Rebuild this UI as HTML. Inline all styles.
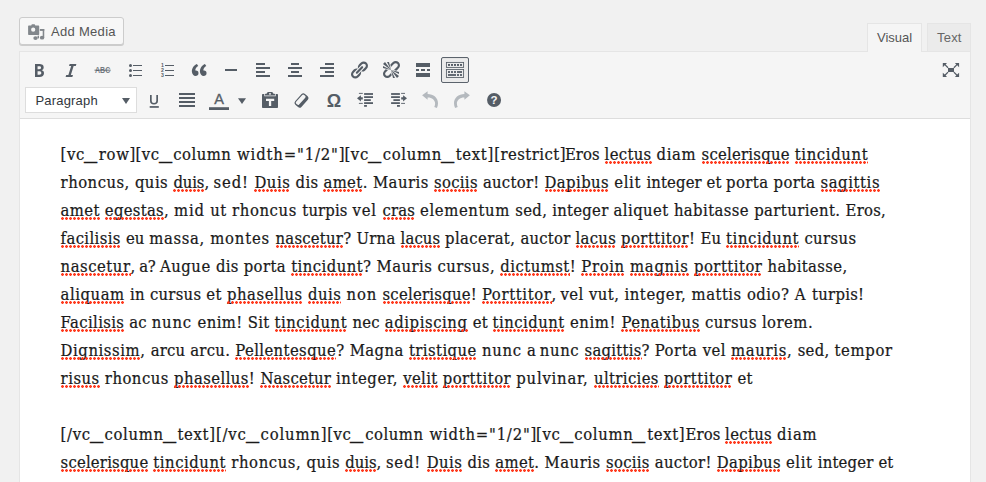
<!DOCTYPE html>
<html><head><meta charset="utf-8"><title>Editor</title>
<style>
html,body{margin:0;padding:0}
body{width:986px;height:482px;overflow:hidden;background:#f1f1f1;position:relative;font-family:"Liberation Sans","DejaVu Sans",sans-serif;font-size:13px;color:#32373c}
.abs{position:absolute;box-sizing:border-box}
#addmedia{left:19px;top:17px;width:105px;height:28px;background:#f7f7f7;border:1px solid #ccc;border-radius:3px;box-shadow:0 1px 0 #ccc;color:#555}
#addmedia span{position:absolute;left:31px;top:6px;line-height:15px;white-space:nowrap;letter-spacing:.3px}
#tab-visual{left:867px;top:23px;width:55px;height:29px;background:#f5f5f5;border:1px solid #e5e5e5;border-bottom:none;color:#555;z-index:3}
#tab-text{left:927px;top:23px;width:44px;height:28px;background:#ebebeb;border:1px solid #e5e5e5;border-bottom:none;color:#666;letter-spacing:.2px}
.tab span{position:absolute;top:6px;line-height:15px;white-space:nowrap}
#wrap{left:19px;top:51px;width:952px;height:440px;border:1px solid #e5e5e5;background:#fff}
#tools{left:20px;top:52px;width:950px;height:67px;background:#f5f5f5;border-bottom:1px solid #ddd}
#fmt{left:25px;top:87px;width:112px;height:26px;background:#fff;border:1px solid #ddd;color:#32373c}
#fmt span{position:absolute;left:9.4px;top:5px;line-height:15px;letter-spacing:.2px}
#fmt i{position:absolute;left:96px;top:10px;width:0;height:0;border-left:4px solid transparent;border-right:4px solid transparent;border-top:6px solid #555d66}
#tog{left:441px;top:57px;width:28px;height:26px;background:#ebebeb;border:1px solid #5b636c;border-radius:2px;box-shadow:inset 0 1px 1px -1px rgba(0,0,0,.3)}
.ic{position:absolute;overflow:visible}
.ln{position:absolute;height:28px;line-height:28px;white-space:pre;font-family:"DejaVu Serif Condensed","DejaVu Serif","Liberation Serif",serif;font-stretch:condensed;font-size:16.5px;color:#1a1a1a;-webkit-text-stroke:.22px #1a1a1a}
.us{display:inline-block;width:13.8px;letter-spacing:0;transform-origin:0 23px;transform:translate(-0.9px,-1.1px) scale(1.77,1.5)}
.sp{position:relative;display:inline-block;line-height:28px}
.sp::after{content:"";position:absolute;left:0;right:0;top:20px;height:3px;background:radial-gradient(circle at 1.5px 1.5px,#ff3b1f 1.1px,rgba(255,59,31,0) 1.6px) 0 0/4px 3px repeat-x}
</style></head><body>
<div id="addmedia" class="abs"><span>Add Media</span></div>
<div id="wrap" class="abs"></div>
<div id="tools" class="abs"></div>
<div id="tab-visual" class="abs tab"><span style="left:9px">Visual</span></div>
<div id="tab-text" class="abs tab"><span style="left:9px">Text</span></div>
<div id="fmt" class="abs"><span>Paragraph</span><i></i></div>
<div id="tog" class="abs"></div>
<svg class="ic" style="left:29px;top:60px" width="20" height="20" viewBox="0 0 20 20" fill="#555d66"><path d="M6 4v13h4.54c1.37 0 2.46-.33 3.26-1 .8-.66 1.2-1.58 1.2-2.77 0-.84-.17-1.51-.51-2.01s-.9-.85-1.67-1.03v-.09c.57-.1 1.02-.4 1.36-.9s.51-1.13.51-1.91c0-1.14-.39-1.98-1.17-2.5C12.75 4.26 11.5 4 9.78 4H6zm2.57 5.15V6.26h1.36c.73 0 1.27.11 1.61.32.34.22.51.58.51 1.07 0 .54-.16.92-.47 1.15s-.82.35-1.51.35h-1.5zm0 2.19h1.6c1.44 0 2.16.53 2.16 1.61 0 .6-.17 1.05-.51 1.34s-.86.43-1.57.43H8.570v-3.38z"/></svg>
<svg class="ic" style="left:61px;top:60px" width="20" height="20" viewBox="0 0 20 20" fill="#555d66"><path d="M14.78 6h-2.13l-2.8 9h2.12l-.62 2H4.6l.62-2h2.14l2.8-9H8.03l.62-2h6.75z"/></svg>
<svg class="ic" style="left:93px;top:60px" width="20" height="20" viewBox="0 0 20 20" fill="#555d66"><text x="2" y="13.200" textLength="15.200" lengthAdjust="spacingAndGlyphs" font-family="Liberation Sans, sans-serif" font-weight="bold" font-size="8.600" fill-opacity=".82">ABC</text><rect x="1.500" y="9.700" width="16.200" height="0.900"/></svg>
<svg class="ic" style="left:125px;top:60px" width="20" height="20" viewBox="0 0 20 20" fill="#555d66"><circle cx="5.5" cy="5.5" r="1.5"/><circle cx="5.5" cy="10.500" r="1.5"/><circle cx="5.5" cy="15.500" r="1.5"/><rect x="8" y="5" width="9" height="1"/><rect x="8" y="10" width="9" height="1"/><rect x="8" y="15" width="9" height="1"/></svg>
<svg class="ic" style="left:157px;top:60px" width="20" height="20" viewBox="0 0 20 20" fill="#555d66"><g font-family="Liberation Sans, sans-serif" font-weight="bold" font-size="5.2"><text x="4" y="7">1</text><text x="4" y="12">2</text><text x="4" y="17">3</text></g><rect x="8" y="5" width="9" height="1"/><rect x="8" y="10" width="9" height="1"/><rect x="8" y="15" width="9" height="1"/></svg>
<svg class="ic" style="left:189px;top:60px" width="20" height="20" viewBox="0 0 20 20" fill="#555d66"><path d="M9.49 13.22c0-.74-.2-1.38-.61-1.9-.62-.78-1.83-.88-2.53-.72-.29-1.650 1.110-3.750 2.920-4.650L7.880 4c-2.730 1.300-5.420 4.280-4.960 8.050C3.210 14.430 4.590 16 6.540 16c.85 0 1.560-.25 2.120-.75s.83-1.180.83-2.030zm8.050 0c0-.74-.2-1.380-.61-1.900-.63-.78-1.830-.88-2.530-.72-.29-1.650 1.110-3.750 2.920-4.650L15.930 4c-2.730 1.300-5.410 4.280-4.950 8.050.29 2.380 1.660 3.950 3.610 3.950.85 0 1.560-.25 2.120-.75s.83-1.180.83-2.030z"/></svg>
<svg class="ic" style="left:221px;top:60px" width="20" height="20" viewBox="0 0 20 20" fill="#555d66"><rect x="4" y="9" width="12" height="2"/></svg>
<svg class="ic" style="left:253px;top:60px" width="20" height="20" viewBox="0 0 20 20" fill="#555d66"><rect x="3" y="3" width="9" height="2"/><rect x="3" y="7" width="14" height="2"/><rect x="3" y="11" width="9" height="2"/><rect x="3" y="15" width="14" height="2"/></svg>
<svg class="ic" style="left:285px;top:60px" width="20" height="20" viewBox="0 0 20 20" fill="#555d66"><rect x="6" y="3" width="8" height="2"/><rect x="3" y="7" width="14" height="2"/><rect x="6" y="11" width="8" height="2"/><rect x="3" y="15" width="14" height="2"/></svg>
<svg class="ic" style="left:317px;top:60px" width="20" height="20" viewBox="0 0 20 20" fill="#555d66"><rect x="8" y="3" width="9" height="2"/><rect x="3" y="7" width="14" height="2"/><rect x="8" y="11" width="9" height="2"/><rect x="3" y="15" width="14" height="2"/></svg>
<svg class="ic" style="left:349px;top:60px" width="20" height="20" viewBox="0 0 20 20" fill="#555d66"><path d="M17.74 2.76c1.68 1.69 1.68 4.41 0 6.1l-1.53 1.52c-1.12 1.12-2.7 1.47-4.14 1.09l2.620-2.610.76-.77.76-.76c.84-.84.84-2.2 0-3.040-.84-.85-2.2-.85-3.040 0l-.77.76-3.380 3.380c-.37-1.440-.02-3.020 1.100-4.140l1.520-1.530c1.690-1.680 4.420-1.680 6.100 0zM8.590 13.430l5.340-5.340c.42-.42.42-1.100 0-1.520-.44-.43-1.130-.39-1.530 0l-5.330 5.340c-.42.42-.42 1.100 0 1.520.44.43 1.130.39 1.520 0zm-.76 2.290l4.140-4.150c.38 1.440.03 3.020-1.090 4.140l-1.520 1.530c-1.690 1.680-4.410 1.680-6.100 0-1.680-1.690-1.680-4.420 0-6.100l1.530-1.520c1.120-1.120 2.700-1.470 4.140-1.100l-4.140 4.150c-.85.84-.85 2.200 0 3.050.84.84 2.200.84 3.040 0z"/></svg>
<svg class="ic" style="left:381px;top:60px" width="20" height="20" viewBox="0 0 20 20" fill="#555d66"><path d="M17.74 2.26c1.680 1.690 1.680 4.410 0 6.100l-1.530 1.520c-.32.33-.69.580-1.080.770L13 10l1.690-1.640.76-.77.76-.76c.84-.84.84-2.200 0-3.040-.84-.85-2.200-.85-3.040 0l-.77.76-.76.76L10 7l-.65-2.140c.19-.38.44-.75.770-1.070l1.520-1.530c1.690-1.680 4.420-1.680 6.100 0zM2 4l8 6-6-8zm4-2l4 8-2-8H6zM2 6l8 4-8-2V6zm7.360 7.690L10 13l.74 2.350-1.380 1.390c-1.690 1.680-4.410 1.680-6.100 0-1.680-1.690-1.680-4.420 0-6.100l1.390-1.380L7 10l-.69.640-1.520 1.530c-.85.840-.85 2.200 0 3.040.84.850 2.200.850 3.040 0zM18 16l-8-6 6 8zm-4 2l-4-8 2 8h2zm4-4l-8-4 8 2v2z"/></svg>
<svg class="ic" style="left:413px;top:60px" width="20" height="20" viewBox="0 0 20 20" fill="#555d66"><rect x="3" y="3" width="14" height="4"/><rect x="3" y="13" width="14" height="4"/><rect x="3" y="9" width="3" height="2"/><rect x="8" y="9" width="4" height="2"/><rect x="14" y="9" width="3" height="2"/></svg>
<svg class="ic" style="left:445px;top:60px" width="20" height="20" viewBox="0 0 20 20" fill="#555d66"><rect x="1.400" y="2.400" width="17.200" height="5" fill="none" stroke="#555d66" stroke-width=".85"/><rect x="1.400" y="9.500" width="17.200" height="8" fill="none" stroke="#555d66" stroke-width=".85"/><rect x="3" y="4" width="2" height="1.900"/><rect x="6" y="4" width="2" height="1.900"/><rect x="9" y="4" width="2" height="1.900"/><rect x="12" y="4" width="2" height="1.900"/><rect x="15" y="4" width="2" height="1.900"/><rect x="3" y="11.100" width="2" height="1.800"/><rect x="6" y="11.100" width="2" height="1.800"/><rect x="9" y="11.100" width="2" height="1.800"/><rect x="12" y="11.100" width="5" height="1.800"/><rect x="3" y="14.100" width="8" height="1.800"/><rect x="12" y="14.100" width="2" height="1.800"/><rect x="15" y="14.100" width="2" height="1.800"/></svg>
<svg class="ic" style="left:144px;top:90px" width="20" height="20" viewBox="0 0 20 20" fill="#555d66"><path d="M6 5.100h1.700v5.500c0 1.700.8 2.500 2.300 2.500s2.300-.8 2.300-2.500V5.100H14v5.600c0 2.500-1.400 3.800-4 3.800s-4-1.300-4-3.800z"/><rect x="5.700" y="16.100" width="9.100" height="1.700"/></svg>
<svg class="ic" style="left:176px;top:90px" width="20" height="20" viewBox="0 0 20 20" fill="#555d66"><rect x="3" y="3" width="16" height="2"/><rect x="3" y="7" width="16" height="2"/><rect x="3" y="11" width="16" height="2"/><rect x="3" y="15" width="16" height="2"/></svg>
<svg class="ic" style="left:208px;top:90px" width="22" height="20" viewBox="0 0 22 20" fill="#555d66"><text x="11" y="14.200" text-anchor="middle" font-family="Liberation Sans, sans-serif" font-size="14.500" stroke="#555d66" stroke-width=".35">A</text><rect x="1" y="17.200" width="20" height="2.800"/></svg>
<svg class="ic" style="left:237px;top:90px" width="10" height="20" viewBox="0 0 10 20" fill="#555d66"><path d="M1 8.200h8l-4 5.800z"/></svg>
<svg class="ic" style="left:260px;top:90px" width="20" height="20" viewBox="0 0 20 20" fill="#555d66"><path fill-rule="evenodd" d="M2.800 4H4.300V6.300H15.700V4H17.200c.5 0 .8.300.8.800v12.400c0 .5-.3.800-.8.800H2.800c-.5 0-.8-.3-.8-.8V4.800c0-.5.300-.8.800-.8zM6 8.800V11h2.900v4.900h2.300V11h3V8.800z"/><path fill-rule="evenodd" d="M5 5.500V4.400c0-.4.200-.6.600-.6h1l.5-1.100c.2-.5.600-.8 1.100-.8h3.600c.5 0 .9.300 1.100.8l.5 1.100h1c.4 0 .6.200.6.600v1.100zM9 3.300h2v1.300H9z"/></svg>
<svg class="ic" style="left:291px;top:90px" width="20" height="20" viewBox="0 0 20 20" fill="#555d66"><g transform="translate(10.500,10.500) rotate(-48)"><rect x="-7.200" y="-4.200" width="14.400" height="8.400" rx="2.400"/><rect x="-5.900" y="-3.100" width="11.800" height="4" rx="1.300" fill="#f5f5f5"/></g></svg>
<svg class="ic" style="left:323px;top:90px" width="22" height="20" viewBox="0 0 22 20" fill="#555d66"><text x="11" y="16.700" text-anchor="middle" font-family="Liberation Sans, sans-serif" font-weight="bold" font-size="18">Ω</text></svg>
<svg class="ic" style="left:356px;top:90px" width="20" height="20" viewBox="0 0 20 20" fill="#555d66"><rect x="8.1" y="3.1" width="8.9" height="1.8"/><rect x="8.1" y="6.2" width="8.9" height="1.8"/><rect x="8.1" y="9.2" width="6.7" height="1.8"/><rect x="8.1" y="12.2" width="8.9" height="1.8"/><rect x="8.1" y="15" width="2.8" height="1.8"/><rect x="2.900" y="2.900" width="3.900" height="0.900"/><rect x="2.900" y="12.900" width="3.900" height="0.900"/><path d="M1 8.350l3.900-3.100v2.050h1.900v2.100h-1.900v2.050z"/></svg>
<svg class="ic" style="left:388px;top:90px" width="20" height="20" viewBox="0 0 20 20" fill="#555d66"><rect x="3.1" y="3.1" width="8.8" height="1.8"/><rect x="3.1" y="6.2" width="8.8" height="1.8"/><rect x="5.4" y="9.2" width="6.5" height="1.8"/><rect x="3.1" y="12.2" width="8.8" height="1.8"/><rect x="9" y="15" width="2.9" height="1.8"/><rect x="13.100" y="2.900" width="3.900" height="0.900"/><rect x="13.100" y="12.900" width="3.900" height="0.900"/><path d="M19 8.350l-3.900-3.100v2.050h-1.900v2.100h1.900v2.050z"/></svg>
<svg class="ic" style="left:420px;top:90px" width="20" height="20" viewBox="0 0 20 20" fill="#b4b9be"><path d="M2.100 5.300L7.600 1.200V4.100C13.500 4.100 18 8 18 13.300C18 15 17.600 16.500 16.900 17.900L14.300 16.900C14.900 15.700 15.100 14.600 15.100 13.500C15.100 10 12.200 7.400 7.600 7.400V9.800Z"/></svg>
<svg class="ic" style="left:452px;top:90px" width="20" height="20" viewBox="0 0 20 20" fill="#b4b9be"><g transform="translate(20,0) scale(-1,1)"><path d="M2.100 5.300L7.600 1.200V4.100C13.500 4.100 18 8 18 13.300C18 15 17.600 16.500 16.900 17.900L14.300 16.900C14.900 15.700 15.100 14.600 15.100 13.500C15.100 10 12.200 7.400 7.600 7.400V9.800Z"/></g></svg>
<svg class="ic" style="left:484px;top:90px" width="20" height="20" viewBox="0 0 20 20" fill="#555d66"><circle cx="10.050" cy="10" r="7"/><text x="10.100" y="14.100" text-anchor="middle" font-family="Liberation Sans, sans-serif" font-weight="bold" font-size="11.500" fill="#f5f5f5">?</text></svg>
<svg class="ic" style="left:941px;top:60px" width="20" height="20" viewBox="0 0 20 20" fill="#555d66"><rect x="7" y="8" width="6" height="4"/><path d="M1.800 3h4.200l-1.400 1.400 2.900 2.900-.9.900-2.900-2.900-1.900 1.900z"/><g transform="translate(19.900,0) scale(-1,1)"><path d="M1.800 3h4.200l-1.400 1.400 2.900 2.900-.9.900-2.900-2.900-1.900 1.900z"/></g><g transform="translate(0,19.900) scale(1,-1)"><path d="M1.800 3h4.200l-1.400 1.400 2.900 2.900-.9.900-2.900-2.900-1.900 1.900z"/></g><g transform="translate(19.900,19.900) scale(-1,-1)"><path d="M1.800 3h4.200l-1.400 1.400 2.900 2.900-.9.900-2.900-2.900-1.900 1.900z"/></g></svg>
<svg class="ic" style="left:28px;top:24px" width="17" height="17" viewBox="0 0 17 17" fill="#82878c"><ellipse cx="7.500" cy="14.100" rx="2.200" ry="1.900"/><ellipse cx="14.050" cy="13.700" rx="2.200" ry="1.900"/><rect x="9.500" y="5" width="1.500" height="9.400"/><rect x="14.700" y="5" width="1.550" height="8.800"/><rect x="9.500" y="5" width="6.750" height="1.900"/><path fill-rule="evenodd" stroke="#f7f7f7" stroke-width="1.300" paint-order="stroke" d="M1.100 1.600h2.100l.5-1c.1-.3.300-.4.600-.4h1.900c.3 0 .5.100.600.400l.5 1h2.900c.6 0 1 .4 1 1v7.500c0 .6-.4 1-1 1H1.100c-.6 0-1-.4-1-1V2.600c0-.6.400-1 1-1zM5.200 3.600a2.100 2.100 0 1 0 0 4.200 2.100 2.100 0 0 0 0-4.200z"/></svg>
<div id="content">
<span class="ln" style="left:60.6px;top:141px;letter-spacing:0.646px">[vc<span class="us">_</span>row]</span>
<span class="ln" style="left:135.6px;top:141px;letter-spacing:0.471px">[vc<span class="us">_</span>column </span>
<span class="ln" style="left:237.0px;top:141px;letter-spacing:0.846px">width=&quot;1/2&quot;]</span>
<span class="ln" style="left:344.4px;top:141px;letter-spacing:0.671px">[vc<span class="us">_</span>column<span class="us">_</span>text]</span>
<span class="ln" style="left:494.3px;top:141px;letter-spacing:0.443px">[restrict]</span>
<span class="ln" style="left:564.9px;top:141px;letter-spacing:0.099px">Eros </span>
<span class="ln" style="left:604.6px;top:141px;letter-spacing:0.328px"><span class="sp">lectus</span> </span>
<span class="ln" style="left:656.6px;top:141px;letter-spacing:0.622px">diam </span>
<span class="ln" style="left:701.6px;top:141px;letter-spacing:0.236px"><span class="sp">scelerisque</span> </span>
<span class="ln" style="left:794.7px;top:141px;letter-spacing:0.631px"><span class="sp">tincidunt</span></span>
<span class="ln" style="left:60.6px;top:169px;letter-spacing:0.469px">rhoncus, </span>
<span class="ln" style="left:134.9px;top:169px;letter-spacing:0.472px">quis </span>
<span class="ln" style="left:173.4px;top:169px;letter-spacing:-0.110px"><span class="sp">duis</span>, </span>
<span class="ln" style="left:213.6px;top:169px;letter-spacing:0.844px">sed! </span>
<span class="ln" style="left:254.4px;top:169px;letter-spacing:0.531px"><span class="sp">Duis</span> </span>
<span class="ln" style="left:295.6px;top:169px;letter-spacing:0.305px">dis </span>
<span class="ln" style="left:323.4px;top:169px;letter-spacing:0.398px"><span class="sp">amet</span>. </span>
<span class="ln" style="left:372.9px;top:169px;letter-spacing:0.472px">Mauris </span>
<span class="ln" style="left:434.0px;top:169px;letter-spacing:0.316px"><span class="sp">sociis</span> </span>
<span class="ln" style="left:482.9px;top:169px;letter-spacing:0.274px">auctor! </span>
<span class="ln" style="left:544.5px;top:169px;letter-spacing:0.426px"><span class="sp">Dapibus</span> </span>
<span class="ln" style="left:614.3px;top:169px;letter-spacing:0.649px">elit </span>
<span class="ln" style="left:646.5px;top:169px;letter-spacing:0.118px">integer </span>
<span class="ln" style="left:706.6px;top:169px;letter-spacing:0.010px">et </span>
<span class="ln" style="left:726.1px;top:169px;letter-spacing:0.406px">porta </span>
<span class="ln" style="left:773.6px;top:169px;letter-spacing:0.306px">porta </span>
<span class="ln" style="left:820.5px;top:169px;letter-spacing:0.575px"><span class="sp">sagittis</span></span>
<span class="ln" style="left:60.6px;top:197px;letter-spacing:0.362px"><span class="sp">amet</span> </span>
<span class="ln" style="left:104.8px;top:197px;letter-spacing:0.306px"><span class="sp">egestas</span>, </span>
<span class="ln" style="left:174.1px;top:197px;letter-spacing:0.763px">mid </span>
<span class="ln" style="left:210.2px;top:197px;letter-spacing:0.517px">ut </span>
<span class="ln" style="left:232.0px;top:197px;letter-spacing:0.616px">rhoncus </span>
<span class="ln" style="left:302.3px;top:197px;letter-spacing:0.128px">turpis </span>
<span class="ln" style="left:352.4px;top:197px;letter-spacing:0.865px">vel </span>
<span class="ln" style="left:382.5px;top:197px;letter-spacing:0.181px"><span class="sp">cras</span> </span>
<span class="ln" style="left:420.0px;top:197px;letter-spacing:0.625px">elementum </span>
<span class="ln" style="left:515.3px;top:197px;letter-spacing:0.314px">sed, </span>
<span class="ln" style="left:552.2px;top:197px;letter-spacing:0.268px">integer </span>
<span class="ln" style="left:613.5px;top:197px;letter-spacing:0.443px">aliquet </span>
<span class="ln" style="left:673.9px;top:197px;letter-spacing:0.411px">habitasse </span>
<span class="ln" style="left:754.2px;top:197px;letter-spacing:0.404px">parturient. </span>
<span class="ln" style="left:845.6px;top:197px;letter-spacing:0.259px">Eros,</span>
<span class="ln" style="left:60.6px;top:225px;letter-spacing:0.371px"><span class="sp">facilisis</span> </span>
<span class="ln" style="left:125.9px;top:225px;letter-spacing:0.112px">eu </span>
<span class="ln" style="left:149.3px;top:225px;letter-spacing:0.640px">massa, </span>
<span class="ln" style="left:210.2px;top:225px;letter-spacing:0.806px">montes </span>
<span class="ln" style="left:275.5px;top:225px;letter-spacing:0.246px"><span class="sp">nascetur</span>? </span>
<span class="ln" style="left:356.4px;top:225px;letter-spacing:0.293px">Urna </span>
<span class="ln" style="left:400.6px;top:225px;letter-spacing:0.115px"><span class="sp">lacus</span> </span>
<span class="ln" style="left:445.1px;top:225px;letter-spacing:0.377px">placerat, </span>
<span class="ln" style="left:520.4px;top:225px;letter-spacing:0.252px">auctor </span>
<span class="ln" style="left:575.6px;top:225px;letter-spacing:0.281px"><span class="sp">lacus</span> </span>
<span class="ln" style="left:621.1px;top:225px;letter-spacing:0.419px"><span class="sp">porttitor</span>! </span>
<span class="ln" style="left:700.6px;top:225px;letter-spacing:0.125px">Eu </span>
<span class="ln" style="left:726.1px;top:225px;letter-spacing:0.566px"><span class="sp">tincidunt</span> </span>
<span class="ln" style="left:804.4px;top:225px;letter-spacing:0.403px">cursus</span>
<span class="ln" style="left:60.6px;top:253px;letter-spacing:0.532px"><span class="sp">nascetur</span>, </span>
<span class="ln" style="left:139.3px;top:253px;letter-spacing:-0.277px">a? </span>
<span class="ln" style="left:160.0px;top:253px;letter-spacing:0.509px">Augue </span>
<span class="ln" style="left:215.9px;top:253px;letter-spacing:0.305px">dis </span>
<span class="ln" style="left:243.7px;top:253px;letter-spacing:0.406px">porta </span>
<span class="ln" style="left:291.2px;top:253px;letter-spacing:0.436px"><span class="sp">tincidunt</span>? </span>
<span class="ln" style="left:376.6px;top:253px;letter-spacing:0.429px">Mauris </span>
<span class="ln" style="left:437.4px;top:253px;letter-spacing:0.462px">cursus, </span>
<span class="ln" style="left:500.3px;top:253px;letter-spacing:0.458px"><span class="sp">dictumst</span>! </span>
<span class="ln" style="left:581.3px;top:253px;letter-spacing:0.623px"><span class="sp">Proin</span> </span>
<span class="ln" style="left:630.1px;top:253px;letter-spacing:0.691px"><span class="sp">magnis</span> </span>
<span class="ln" style="left:694.0px;top:253px;letter-spacing:0.468px"><span class="sp">porttitor</span> </span>
<span class="ln" style="left:767.6px;top:253px;letter-spacing:0.381px">habitasse,</span>
<span class="ln" style="left:60.6px;top:281px;letter-spacing:0.532px"><span class="sp">aliquam</span> </span>
<span class="ln" style="left:129.9px;top:281px;letter-spacing:0.356px">in </span>
<span class="ln" style="left:150.0px;top:281px;letter-spacing:0.245px">cursus </span>
<span class="ln" style="left:206.2px;top:281px;letter-spacing:0.444px">et </span>
<span class="ln" style="left:227.0px;top:281px;letter-spacing:0.530px"><span class="sp">phasellus</span> </span>
<span class="ln" style="left:308.0px;top:281px;letter-spacing:0.492px"><span class="sp">duis</span> </span>
<span class="ln" style="left:346.6px;top:281px;letter-spacing:0.780px">non </span>
<span class="ln" style="left:382.5px;top:281px;letter-spacing:0.244px"><span class="sp">scelerisque</span>! </span>
<span class="ln" style="left:481.9px;top:281px;letter-spacing:0.631px"><span class="sp">Porttitor</span>, </span>
<span class="ln" style="left:560.5px;top:281px;letter-spacing:0.465px">vel </span>
<span class="ln" style="left:589.0px;top:281px;letter-spacing:0.411px">vut, </span>
<span class="ln" style="left:624.4px;top:281px;letter-spacing:0.573px">integer, </span>
<span class="ln" style="left:691.6px;top:281px;letter-spacing:0.483px">mattis </span>
<span class="ln" style="left:746.9px;top:281px;letter-spacing:0.501px">odio? </span>
<span class="ln" style="left:794.7px;top:281px;letter-spacing:0.981px">A </span>
<span class="ln" style="left:812.1px;top:281px;letter-spacing:0.250px">turpis!</span>
<span class="ln" style="left:60.6px;top:309px;letter-spacing:0.343px"><span class="sp">Facilisis</span> </span>
<span class="ln" style="left:129.3px;top:309px;letter-spacing:0.175px">ac </span>
<span class="ln" style="left:151.7px;top:309px;letter-spacing:0.816px">nunc </span>
<span class="ln" style="left:197.5px;top:309px;letter-spacing:0.393px">enim! </span>
<span class="ln" style="left:247.7px;top:309px;letter-spacing:0.302px">Sit </span>
<span class="ln" style="left:274.5px;top:309px;letter-spacing:0.526px"><span class="sp">tincidunt</span> </span>
<span class="ln" style="left:352.4px;top:309px;letter-spacing:0.256px">nec </span>
<span class="ln" style="left:384.8px;top:309px;letter-spacing:0.564px"><span class="sp">adipiscing</span> </span>
<span class="ln" style="left:472.8px;top:309px;letter-spacing:0.110px">et </span>
<span class="ln" style="left:492.6px;top:309px;letter-spacing:0.466px"><span class="sp">tincidunt</span> </span>
<span class="ln" style="left:569.9px;top:309px;letter-spacing:0.609px">enim! </span>
<span class="ln" style="left:621.4px;top:309px;letter-spacing:0.505px"><span class="sp">Penatibus</span> </span>
<span class="ln" style="left:705.0px;top:309px;letter-spacing:0.345px">cursus </span>
<span class="ln" style="left:761.9px;top:309px;letter-spacing:0.473px">lorem.</span>
<span class="ln" style="left:60.6px;top:337px;letter-spacing:0.560px"><span class="sp">Dignissim</span>, </span>
<span class="ln" style="left:150.7px;top:337px;letter-spacing:0.191px">arcu </span>
<span class="ln" style="left:190.2px;top:337px;letter-spacing:0.308px">arcu. </span>
<span class="ln" style="left:235.3px;top:337px;letter-spacing:0.402px"><span class="sp">Pellentesque</span>? </span>
<span class="ln" style="left:349.7px;top:337px;letter-spacing:0.421px">Magna </span>
<span class="ln" style="left:408.9px;top:337px;letter-spacing:0.430px"><span class="sp">tristique</span> </span>
<span class="ln" style="left:481.9px;top:337px;letter-spacing:0.696px">nunc </span>
<span class="ln" style="left:527.1px;top:337px;letter-spacing:-0.431px">a </span>
<span class="ln" style="left:539.8px;top:337px;letter-spacing:0.616px">nunc </span>
<span class="ln" style="left:584.6px;top:337px;letter-spacing:0.251px"><span class="sp">sagittis</span>? </span>
<span class="ln" style="left:654.8px;top:337px;letter-spacing:0.502px">Porta </span>
<span class="ln" style="left:702.7px;top:337px;letter-spacing:0.440px">vel </span>
<span class="ln" style="left:731.1px;top:337px;letter-spacing:0.651px"><span class="sp">mauris</span>, </span>
<span class="ln" style="left:797.7px;top:337px;letter-spacing:0.294px">sed, </span>
<span class="ln" style="left:834.5px;top:337px;letter-spacing:0.657px">tempor</span>
<span class="ln" style="left:60.6px;top:365px;letter-spacing:0.473px"><span class="sp">risus</span> </span>
<span class="ln" style="left:104.8px;top:365px;letter-spacing:0.491px">rhoncus </span>
<span class="ln" style="left:174.1px;top:365px;letter-spacing:0.421px"><span class="sp">phasellus</span>! </span>
<span class="ln" style="left:260.4px;top:365px;letter-spacing:0.190px"><span class="sp">Nascetur</span> </span>
<span class="ln" style="left:336.0px;top:365px;letter-spacing:0.573px">integer, </span>
<span class="ln" style="left:403.2px;top:365px;letter-spacing:0.359px"><span class="sp">velit</span> </span>
<span class="ln" style="left:442.7px;top:365px;letter-spacing:0.468px"><span class="sp">porttitor</span> </span>
<span class="ln" style="left:516.3px;top:365px;letter-spacing:0.764px">pulvinar, </span>
<span class="ln" style="left:594.0px;top:365px;letter-spacing:0.360px"><span class="sp">ultricies</span> </span>
<span class="ln" style="left:663.9px;top:365px;letter-spacing:0.468px"><span class="sp">porttitor</span> </span>
<span class="ln" style="left:737.5px;top:365px;letter-spacing:0.325px">et</span>
<span class="ln" style="left:60.6px;top:421px;letter-spacing:0.655px">[/vc<span class="us">_</span>column<span class="us">_</span>text]</span>
<span class="ln" style="left:215.9px;top:421px;letter-spacing:0.834px">[/vc<span class="us">_</span>column]</span>
<span class="ln" style="left:327.2px;top:421px;letter-spacing:0.544px">[vc<span class="us">_</span>column </span>
<span class="ln" style="left:429.4px;top:421px;letter-spacing:0.787px">width=&quot;1/2&quot;]</span>
<span class="ln" style="left:536.1px;top:421px;letter-spacing:0.646px">[vc<span class="us">_</span>column<span class="us">_</span>text]</span>
<span class="ln" style="left:685.6px;top:421px;letter-spacing:0.059px">Eros </span>
<span class="ln" style="left:725.1px;top:421px;letter-spacing:0.314px"><span class="sp">lectus</span> </span>
<span class="ln" style="left:777.0px;top:421px;letter-spacing:0.832px">diam</span>
<span class="ln" style="left:60.6px;top:449px;letter-spacing:0.203px"><span class="sp">scelerisque</span> </span>
<span class="ln" style="left:153.3px;top:449px;letter-spacing:0.536px"><span class="sp">tincidunt</span> </span>
<span class="ln" style="left:231.3px;top:449px;letter-spacing:0.580px">rhoncus, </span>
<span class="ln" style="left:306.6px;top:449px;letter-spacing:0.492px">quis </span>
<span class="ln" style="left:345.2px;top:449px;letter-spacing:-0.027px"><span class="sp">duis</span>, </span>
<span class="ln" style="left:385.9px;top:449px;letter-spacing:0.844px">sed! </span>
<span class="ln" style="left:426.7px;top:449px;letter-spacing:0.451px"><span class="sp">Duis</span> </span>
<span class="ln" style="left:467.5px;top:449px;letter-spacing:0.305px">dis </span>
<span class="ln" style="left:495.3px;top:449px;letter-spacing:0.348px"><span class="sp">amet</span>. </span>
<span class="ln" style="left:544.5px;top:449px;letter-spacing:0.529px">Mauris </span>
<span class="ln" style="left:606.0px;top:449px;letter-spacing:0.302px"><span class="sp">sociis</span> </span>
<span class="ln" style="left:654.8px;top:449px;letter-spacing:0.312px">auctor! </span>
<span class="ln" style="left:716.7px;top:449px;letter-spacing:0.364px"><span class="sp">Dapibus</span> </span>
<span class="ln" style="left:786.0px;top:449px;letter-spacing:0.569px">elit </span>
<span class="ln" style="left:817.8px;top:449px;letter-spacing:0.180px">integer </span>
<span class="ln" style="left:878.4px;top:449px;letter-spacing:0.125px">et</span>
</div>
</body></html>
